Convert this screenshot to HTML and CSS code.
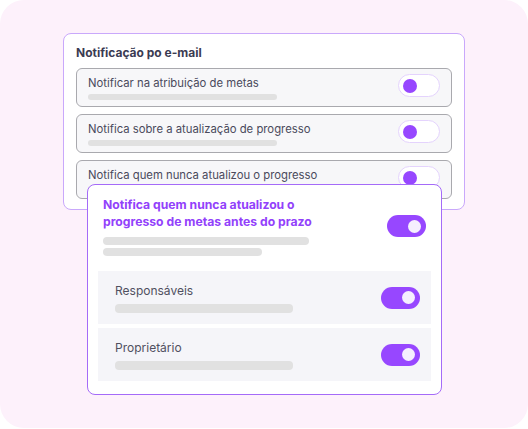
FILE: index.html
```html
<!DOCTYPE html>
<html lang="pt-BR">
<head>
    <meta charset="UTF-8">
    <meta name="viewport" content="width=device-width, initial-scale=1.0">
    <title>Notificação por e-mail</title>
    <link rel="stylesheet" href="styles.css">
</head>
<body>
    <div class="frame">
        <div class="settings-card">
            <h2 class="settings-title">Notificação po e-mail</h2>
            <div class="setting-list">
                <div class="setting-row">
                    <div class="setting-info">
                        <span class="setting-label">Notificar na atribuição de metas</span>
                        <span class="bar bar-sm"></span>
                    </div>
                    <span class="switch"></span>
                </div>
                <div class="setting-row">
                    <div class="setting-info">
                        <span class="setting-label">Notifica sobre a atualização de progresso</span>
                        <span class="bar bar-sm"></span>
                    </div>
                    <span class="switch"></span>
                </div>
                <div class="setting-row">
                    <div class="setting-info">
                        <span class="setting-label">Notifica quem nunca atualizou o progresso</span>
                        <span class="bar bar-sm"></span>
                    </div>
                    <span class="switch"></span>
                </div>
            </div>
        </div>

        <div class="detail-card">
            <div class="detail-head">
                <div class="detail-info">
                    <h3 class="detail-title">Notifica quem nunca atualizou o<br>progresso de metas antes do prazo</h3>
                    <span class="bar bar-lg"></span>
                    <span class="bar bar-md"></span>
                </div>
                <span class="switch switch-on"></span>
            </div>
            <div class="detail-options">
                <div class="option-row">
                    <div class="option-info">
                        <span class="option-label">Responsáveis</span>
                        <span class="bar bar-opt"></span>
                    </div>
                    <span class="switch switch-on"></span>
                </div>
                <div class="option-row">
                    <div class="option-info">
                        <span class="option-label">Proprietário</span>
                        <span class="bar bar-opt"></span>
                    </div>
                    <span class="switch switch-on"></span>
                </div>
            </div>
        </div>
    </div>
</body>
</html>
```

FILE: styles.css
```css
* {
  margin: 0;
  padding: 0;
  box-sizing: border-box;
}

body {
  font-family: 'Inter', 'Noto Sans', sans-serif;
  background-color: #fff;
}

.frame {
  position: relative;
  width: 528px;
  height: 428px;
  border-radius: 24px;
  background-color: #fdf1fb;
  padding: 33px 0 0 63px;
}

/* back card */
.settings-card {
  width: 402px;
  height: 177px;
  background-color: #fff;
  border: 1px solid #c9a8fb;
  border-radius: 8px;
  padding: 10px 12px 0 12px;
}

.settings-title {
  font-size: 12px;
  font-weight: 700;
  color: #3b3b52;
  line-height: 17px;
  margin-bottom: 7px;
}

.setting-list {
  display: flex;
  flex-direction: column;
  gap: 7px;
}

.setting-row {
  display: flex;
  align-items: center;
  justify-content: space-between;
  height: 39px;
  background-color: #f7f7f9;
  border: 1px solid #a9a9ae;
  border-radius: 6px;
  padding: 0 11px 0 11px;
}

.setting-info {
  display: flex;
  flex-direction: column;
  gap: 3px;
}

.setting-label {
  font-size: 11.3px;
  color: #4a4a5c;
  line-height: 16px;
}

.bar {
  display: block;
  background-color: #e1e1e1;
  border-radius: 4px;
}

.bar-sm {
  width: 189px;
  height: 6px;
}

.switch {
  position: relative;
  display: block;
  width: 42px;
  height: 23px;
  border: 1px solid #e4d3fd;
  border-radius: 12px;
  background-color: #fff;
  margin-bottom: 4px;
}

.switch::after {
  content: '';
  position: absolute;
  top: 4px;
  left: 4px;
  width: 14px;
  height: 14px;
  border-radius: 50%;
  background-color: #9747ff;
}

/* front card */
.detail-card {
  position: absolute;
  left: 87px;
  top: 184px;
  width: 355px;
  height: 211px;
  background-color: #fff;
  border: 1px solid #a56bf8;
  border-radius: 8px;
  padding: 11px 10px 13px;
  display: flex;
  flex-direction: column;
  gap: 15px;
}

.detail-head {
  display: flex;
  align-items: center;
  justify-content: space-between;
  padding: 0 5px;
}

.detail-info {
  display: flex;
  flex-direction: column;
  gap: 3px;
}

.detail-title {
  font-size: 12.2px;
  font-weight: 700;
  color: #9241fb;
  line-height: 17px;
  margin-bottom: 4px;
}

.bar-lg {
  width: 206px;
  height: 8px;
}

.bar-md {
  width: 159px;
  height: 8px;
}

.switch-on {
  width: 39px;
  height: 22px;
  border: none;
  background-color: #9747ff;
  margin-bottom: 0;
}

.switch-on::after {
  top: 4.5px;
  left: auto;
  right: 5px;
  width: 13px;
  height: 13px;
  background-color: #f5effe;
}

.detail-options {
  display: flex;
  flex-direction: column;
  gap: 4px;
}

.option-row {
  display: flex;
  align-items: center;
  justify-content: space-between;
  height: 53px;
  background-color: #f5f5f9;
  padding: 0 11px 0 17px;
}

.option-info {
  display: flex;
  flex-direction: column;
  gap: 5px;
}

.option-label {
  font-size: 12px;
  color: #505060;
  line-height: 16px;
}

.bar-opt {
  width: 178px;
  height: 9px;
}
```
